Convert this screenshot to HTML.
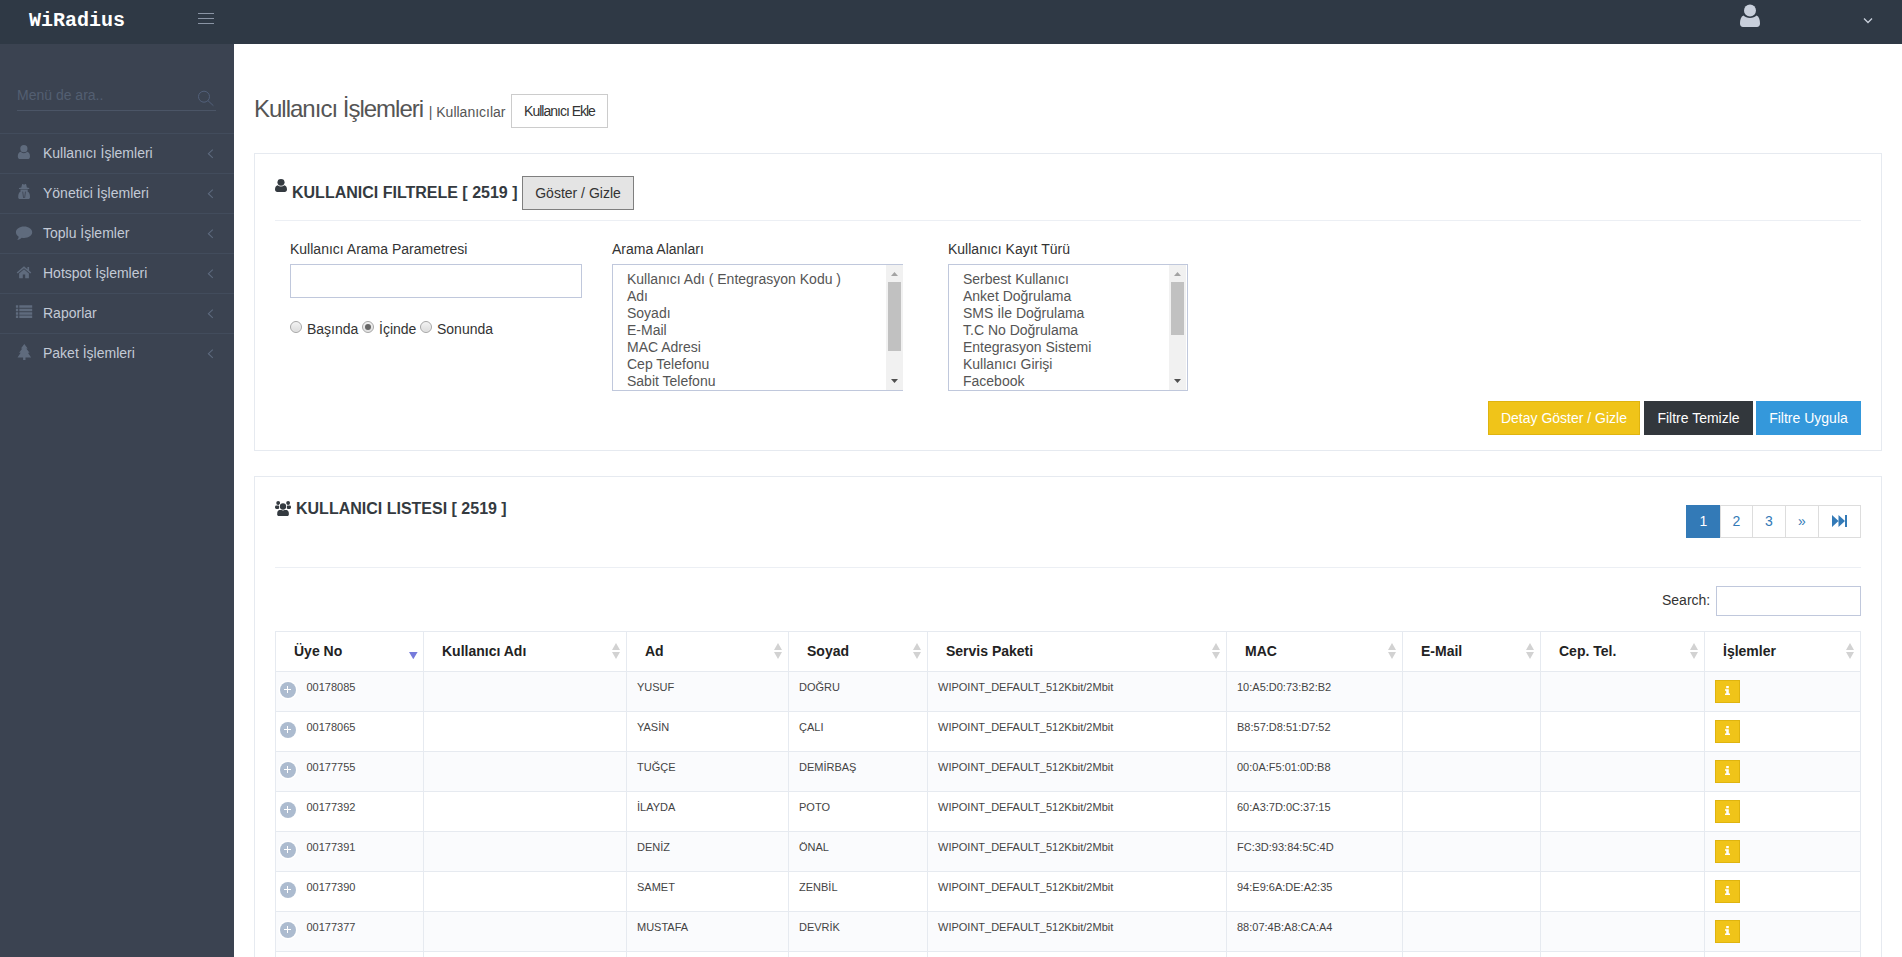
<!DOCTYPE html>
<html lang="tr">
<head>
<meta charset="utf-8">
<title>WiRadius</title>
<style>
*{box-sizing:border-box;}
html,body{margin:0;padding:0;}
body{width:1902px;height:957px;overflow:hidden;background:#fff;font-family:"Liberation Sans",Arial,sans-serif;font-size:14px;color:#333;position:relative;}
.a{position:absolute;white-space:nowrap;}
#hdr{left:0;top:0;width:1902px;height:44px;background:#2f3945;}
#logo{left:29px;top:9px;font-family:"Liberation Mono",monospace;font-weight:bold;font-size:20px;line-height:24px;color:#fff;}
#side{left:0;top:44px;width:234px;height:913px;background:#3b4351;}
#msearch{left:17px;top:81px;width:199px;height:30px;border-bottom:1px solid #4b5566;color:#535f71;font-size:14px;line-height:28px;}
.mi{left:0;width:234px;height:40px;border-top:1px solid #424c5c;color:#c3cad6;font-size:14px;line-height:39px;padding-left:43px;}
h3.pt{left:254px;top:94px;margin:0;font-size:24px;font-weight:normal;color:#555;letter-spacing:-1px;line-height:30px;}
h3.pt small{font-size:14px;color:#555;letter-spacing:0;}
.btn{text-align:center;font-size:14px;}
.panel{left:254px;width:1628px;border:1px solid #e6eaf0;background:#fff;}
.ph{font-size:16px;font-weight:bold;color:#343a40;line-height:20px;}
.hr{height:1px;background:#eceff4;}
.lbl{font-size:14px;color:#333;line-height:16px;}
.inp{border:1px solid #c0c8dc;background:#fff;}
.radio{width:12px;height:12px;border-radius:50%;border:1px solid #a6a6a6;background:linear-gradient(#f3f3f3,#dcdcdc);box-shadow:inset 0 0 1px #fff;}
.radio.on::after{content:"";position:absolute;left:2px;top:2px;width:6px;height:6px;border-radius:50%;background:#666;}
.sel{border:1px solid #c0c8dc;background:#fff;overflow:hidden;}
.opt{left:14px;font-size:14px;line-height:17px;color:#555;height:17px;}
.sb{background:#f1f1f1;width:17px;}
.thumb{background:#c1c1c1;width:13px;}
.pg{top:505px;height:33px;border:1px solid #ddd;background:#fff;color:#337ab7;font-size:14px;line-height:31px;text-align:center;}
.pg.on{background:#337ab7;border-color:#337ab7;color:#fff;}
.th{top:631px;height:41px;border:1px solid #e6eaf0;border-right:none;background:#fff;font-weight:bold;font-size:14px;color:#222;line-height:39px;padding-left:18px;}
.td{height:41px;border:1px solid #e6eaf0;border-right:none;font-size:11px;color:#444;line-height:13px;padding:9px 0 0 10px;}
.odd{background:#fafbfd;}
.plus{left:4px;top:10px;width:16px;height:16px;border-radius:50%;background:#acbbcf;box-shadow:0 0 0 1.5px #fff;}
.plus::before{content:"";position:absolute;left:4.100px;top:6.900px;width:7px;height:1.200px;background:#fff;}
.plus::after{content:"";position:absolute;left:7px;top:4px;width:1.300px;height:7px;background:#fff;}
.ib{width:25px;height:23px;background:#f0c419;border:1px solid #dfb40f;}
</style>
</head>
<body>
<div id="hdr" class="a">
<div id="logo" class="a">WiRadius</div>
<svg class="a" style="left:198px;top:12px" width="16" height="14" viewBox="0 0 16 14"><path d="M0 1.5H16M0 6.500H16M0 11.500H16" stroke="#8a94a4" stroke-width="1" fill="none"/></svg>
<svg class="a" style="left:1739px;top:4px" width="22" height="24" viewBox="0 0 22 24"><circle cx="11" cy="6.500" r="6" fill="#c8cfdb"/><path d="M4.500 11.500C2 12.500 1 15.500 1 19.500C1 21.500 2.200 23 4 23H18C19.800 23 21 21.500 21 19.500C21 15.500 20 12.500 17.500 11.500C16 13 13.800 14 11 14C8.200 14 6 13 4.500 11.500Z" fill="#c8cfdb"/></svg>
<svg class="a" style="left:1863px;top:17px" width="10" height="8" viewBox="0 0 10 8"><path d="M1 1.500L5 5.500L9 1.500" stroke="#c8cfdb" stroke-width="1.300" fill="none"/></svg>
</div>
<div id="side" class="a"></div>
<div id="msearch" class="a">Menü de ara..</div>
<svg class="a" style="left:197px;top:89px" width="18" height="18" viewBox="0 0 18 18"><circle cx="7" cy="7.700" r="5.500" stroke="#52607a" stroke-width="1" fill="none"/><path d="M11 11.700L16.400 16.700" stroke="#52607a" stroke-width="1"/></svg>
<div class="mi a" style="top:133px">Kullanıcı İşlemleri</div>
<svg class="a" style="left:15px;top:143px" width="19" height="19" viewBox="0 0 19 19" fill="#5f6b7d"><circle cx="8.900" cy="5.700" r="3.600"/><path d="M2.800 13.500C2.800 10.500 4 9.200 5.600 8.800C6.500 9.700 7.600 10.200 8.900 10.200C10.200 10.200 11.300 9.700 12.200 8.800C13.800 9.200 15 10.500 15 13.500C15 15.200 14 16.100 12.700 16.100H5.100C3.800 16.100 2.800 15.200 2.800 13.500Z"/></svg>
<svg class="a" style="left:206px;top:148px" width="8" height="12" viewBox="0 0 8 12"><path d="M6.800 1.600L2.400 5.700L6.800 9.800" stroke="#5d6a7e" stroke-width="1.100" fill="none"/></svg>
<div class="mi a" style="top:173px">Yönetici İşlemleri</div>
<svg class="a" style="left:15px;top:183px" width="19" height="19" viewBox="0 0 19 19" fill="#5f6b7d"><path d="M6.300 4.600L7.100 1.300C7.200 1 7.500 0.900 7.800 1.100L8.600 1.600H9.600L10.400 1.100C10.700 0.900 11 1 11.100 1.300L11.900 4.600L14.200 5.100V6H4V5.100Z"/><path d="M5.400 6.500H12.800L12.600 8.600C14.200 9.400 15 11.300 15 14.200C15 15.300 14.300 16 13.300 16H4.900C3.900 16 3.200 15.300 3.200 14.200C3.200 11.300 4 9.400 5.600 8.600Z"/><path d="M7.700 8.600L8.600 15M10.500 8.600L9.600 15" stroke="#3b4351" stroke-width="0.800" fill="none"/></svg>
<svg class="a" style="left:206px;top:188px" width="8" height="12" viewBox="0 0 8 12"><path d="M6.800 1.600L2.400 5.700L6.800 9.800" stroke="#5d6a7e" stroke-width="1.100" fill="none"/></svg>
<div class="mi a" style="top:213px">Toplu İşlemler</div>
<svg class="a" style="left:15px;top:223px" width="19" height="19" viewBox="0 0 19 19" fill="#5f6b7d"><path d="M9.050 3.600C13.550 3.600 17.200 6.150 17.200 9.300C17.200 12.450 13.550 15 9.050 15C8.250 15 7.500 14.920 6.800 14.780C5.600 16 3.900 16.900 2 17.100C2.900 16.200 3.500 15.200 3.700 13.700C2 12.650 0.900 11.050 0.900 9.300C0.900 6.150 4.550 3.600 9.050 3.600Z"/></svg>
<svg class="a" style="left:206px;top:228px" width="8" height="12" viewBox="0 0 8 12"><path d="M6.800 1.600L2.400 5.700L6.800 9.800" stroke="#5d6a7e" stroke-width="1.100" fill="none"/></svg>
<div class="mi a" style="top:253px">Hotspot İşlemleri</div>
<svg class="a" style="left:15px;top:263px" width="19" height="19" viewBox="0 0 19 19" fill="#5f6b7d"><path d="M9 3.300L1.700 9.400L2.700 10.500L9 5.200L15.300 10.500L16.300 9.400L14.100 7.550V4.100H12.400V6.150Z"/><path d="M9 6.300L4.100 10.400V15.200H7.800V11.600H10.200V15.200H13.900V10.400Z"/></svg>
<svg class="a" style="left:206px;top:268px" width="8" height="12" viewBox="0 0 8 12"><path d="M6.800 1.600L2.400 5.700L6.800 9.800" stroke="#5d6a7e" stroke-width="1.100" fill="none"/></svg>
<div class="mi a" style="top:293px">Raporlar</div>
<svg class="a" style="left:15px;top:303px" width="19" height="19" viewBox="0 0 19 19" fill="#5f6b7d"><path d="M0.900 2.200H3.200V4.700H0.900ZM4.300 2.200H17.200V4.700H4.300ZM0.900 5.670H3.200V8.170H0.900ZM4.300 5.670H17.200V8.170H4.300ZM0.900 9.130H3.200V11.630H0.900ZM4.300 9.130H17.200V11.630H4.300ZM0.900 12.600H3.200V15.100H0.900ZM4.300 12.600H17.200V15.100H4.300Z"/></svg>
<svg class="a" style="left:206px;top:308px" width="8" height="12" viewBox="0 0 8 12"><path d="M6.800 1.600L2.400 5.700L6.800 9.800" stroke="#5d6a7e" stroke-width="1.100" fill="none"/></svg>
<div class="mi a" style="top:333px">Paket İşlemleri</div>
<svg class="a" style="left:15px;top:343px" width="19" height="19" viewBox="0 0 19 19" fill="#5f6b7d"><path d="M9.300 1.100L12.700 5.500H11.300L14.500 9.700H12.900L16.100 14.500H10.500V17.100H8.100V14.500H2.500L5.700 9.700H4.100L7.300 5.500H5.900Z"/></svg>
<svg class="a" style="left:206px;top:348px" width="8" height="12" viewBox="0 0 8 12"><path d="M6.800 1.600L2.400 5.700L6.800 9.800" stroke="#5d6a7e" stroke-width="1.100" fill="none"/></svg>
<h3 class="pt a">Kullanıcı İşlemleri <small>| Kullanıcılar</small></h3>
<div class="btn a" style="left:511px;top:94px;width:97px;height:34px;border:1px solid #ccc;background:#fff;color:#333;letter-spacing:-1px;line-height:32px;">Kullanıcı Ekle</div>
<div class="panel a" style="top:153px;height:298px;"></div>
<svg class="a" style="left:275px;top:179px" width="12" height="13" viewBox="2.8 2.100 12.200 14" fill="#343a40" preserveAspectRatio="none"><circle cx="8.900" cy="5.700" r="3.600"/><path d="M2.800 13.500C2.800 10.500 4 9.200 5.600 8.800C6.500 9.700 7.600 10.200 8.900 10.200C10.200 10.200 11.300 9.700 12.200 8.800C13.800 9.200 15 10.500 15 13.500C15 15.200 14 16.100 12.700 16.100H5.100C3.800 16.100 2.800 15.200 2.800 13.500Z"/></svg>
<div class="ph a" style="left:292px;top:183px;">KULLANICI FILTRELE [ 2519 ]</div>
<div class="btn a" style="left:522px;top:176px;width:112px;height:34px;border:1px solid #7f7f7f;background:#e4e4e4;color:#333;line-height:33px;">Göster / Gizle</div>
<div class="hr a" style="left:275px;top:220px;width:1586px;"></div>
<div class="lbl a" style="left:290px;top:241px;">Kullanıcı Arama Parametresi</div>
<div class="lbl a" style="left:612px;top:241px;">Arama Alanları</div>
<div class="lbl a" style="left:948px;top:241px;">Kullanıcı Kayıt Türü</div>
<div class="inp a" style="left:290px;top:264px;width:292px;height:34px;"></div>
<div class="radio a" style="left:290px;top:321px;"></div><div class="lbl a" style="left:307px;top:321px;">Başında</div>
<div class="radio on a" style="left:362px;top:321px;"></div><div class="lbl a" style="left:379px;top:321px;">İçinde</div>
<div class="radio a" style="left:420px;top:321px;"></div><div class="lbl a" style="left:437px;top:321px;">Sonunda</div>
<div class="sel a" style="left:612px;top:264px;width:291px;height:127px;border-right:none;">
<div class="opt a" style="top:6px">Kullanıcı Adı ( Entegrasyon Kodu )</div>
<div class="opt a" style="top:23px">Adı</div>
<div class="opt a" style="top:40px">Soyadı</div>
<div class="opt a" style="top:57px">E-Mail</div>
<div class="opt a" style="top:74px">MAC Adresi</div>
<div class="opt a" style="top:91px">Cep Telefonu</div>
<div class="opt a" style="top:108px">Sabit Telefonu</div>
<div class="opt a" style="top:125px">Adres</div>
<div class="sb a" style="left:273px;top:0;height:125px;"></div>
<div class="thumb a" style="left:275px;top:17px;height:69px;"></div>
<svg class="a" style="left:278px;top:7px" width="7" height="4" viewBox="0 0 7 4"><path d="M0 4L3.500 0L7 4Z" fill="#a3a3a3"/></svg>
<svg class="a" style="left:278px;top:114px" width="7" height="4" viewBox="0 0 7 4"><path d="M0 0L3.500 4L7 0Z" fill="#505050"/></svg>
</div>
<div class="sel a" style="left:948px;top:264px;width:240px;height:127px;">
<div class="opt a" style="top:6px">Serbest Kullanıcı</div>
<div class="opt a" style="top:23px">Anket Doğrulama</div>
<div class="opt a" style="top:40px">SMS İle Doğrulama</div>
<div class="opt a" style="top:57px">T.C No Doğrulama</div>
<div class="opt a" style="top:74px">Entegrasyon Sistemi</div>
<div class="opt a" style="top:91px">Kullanıcı Girişi</div>
<div class="opt a" style="top:108px">Facebook</div>
<div class="opt a" style="top:125px">Twitter</div>
<div class="sb a" style="left:220px;top:0;height:125px;"></div>
<div class="thumb a" style="left:222px;top:17px;height:53px;"></div>
<svg class="a" style="left:225px;top:7px" width="7" height="4" viewBox="0 0 7 4"><path d="M0 4L3.500 0L7 4Z" fill="#a3a3a3"/></svg>
<svg class="a" style="left:225px;top:114px" width="7" height="4" viewBox="0 0 7 4"><path d="M0 0L3.500 4L7 0Z" fill="#505050"/></svg>
</div>
<div class="btn a" style="left:1488px;top:401px;width:152px;height:34px;background:#f0c419;border:1px solid #dfb40f;color:#fff;line-height:32px;">Detay Göster / Gizle</div>
<div class="btn a" style="left:1644px;top:401px;width:109px;height:34px;background:#32373c;color:#fff;line-height:34px;">Filtre Temizle</div>
<div class="btn a" style="left:1756px;top:401px;width:105px;height:34px;background:#3498db;color:#fff;line-height:34px;">Filtre Uygula</div>
<div class="panel a" style="top:476px;height:520px;"></div>
<svg class="a" style="left:274px;top:500px" width="18" height="17" viewBox="0 0 18 17" fill="#343a40"><circle cx="4.200" cy="3" r="1.950"/><circle cx="14.100" cy="3" r="1.950"/><rect x="1.050" y="5.400" width="4.400" height="3.500" rx="1.300"/><rect x="12.600" y="5.400" width="4.400" height="3.500" rx="1.300"/><path d="M3.150 14.200C3.150 11.900 3.900 10.500 5.300 10.100H12.700C14.100 10.500 14.900 11.900 14.900 14.200C14.900 15.300 14.200 16 13.200 16H4.800C3.800 16 3.150 15.300 3.150 14.200Z"/><circle cx="9" cy="6.500" r="3.900" fill="#fff"/><circle cx="9" cy="6.500" r="3.150"/></svg>
<div class="ph a" style="left:296px;top:499px;">KULLANICI LISTESI [ 2519 ]</div>
<div class="pg a on" style="left:1686px;width:35px;">1</div>
<div class="pg a" style="left:1720px;width:33px;">2</div>
<div class="pg a" style="left:1752px;width:34px;">3</div>
<div class="pg a" style="left:1785px;width:34px;">»</div>
<div class="pg a" style="left:1818px;width:43px;"></div>
<svg class="a" style="left:1832px;top:515px" width="15" height="12" viewBox="0 0 15 12" fill="#337ab7"><path d="M0 0L6.500 6L0 12ZM6.500 0L13 6L6.500 12ZM13 0H15V12H13Z"/></svg>
<div class="hr a" style="left:275px;top:567px;width:1586px;"></div>
<div class="lbl a" style="left:1662px;top:592px;">Search:</div>
<div class="inp a" style="left:1716px;top:586px;width:145px;height:30px;"></div>
<div class="th a" style="left:275px;width:148px;">Üye No</div>
<svg class="a" style="left:409.300px;top:652px" width="8.600" height="7.200" viewBox="0 0 8 7" preserveAspectRatio="none"><path d="M0 0H8L4 7Z" fill="#767bdb"/></svg>
<div class="th a" style="left:423px;width:203px;">Kullanıcı Adı</div>
<svg class="a" style="left:612px;top:643px" width="8" height="16" viewBox="0 0 8 15" fill="#d2d2d2" preserveAspectRatio="none"><path d="M0 6.500L4 0L8 6.500ZM0 8.500H8L4 15Z"/></svg>
<div class="th a" style="left:626px;width:162px;">Ad</div>
<svg class="a" style="left:774px;top:643px" width="8" height="16" viewBox="0 0 8 15" fill="#d2d2d2" preserveAspectRatio="none"><path d="M0 6.500L4 0L8 6.500ZM0 8.500H8L4 15Z"/></svg>
<div class="th a" style="left:788px;width:139px;">Soyad</div>
<svg class="a" style="left:913px;top:643px" width="8" height="16" viewBox="0 0 8 15" fill="#d2d2d2" preserveAspectRatio="none"><path d="M0 6.500L4 0L8 6.500ZM0 8.500H8L4 15Z"/></svg>
<div class="th a" style="left:927px;width:299px;">Servis Paketi</div>
<svg class="a" style="left:1212px;top:643px" width="8" height="16" viewBox="0 0 8 15" fill="#d2d2d2" preserveAspectRatio="none"><path d="M0 6.500L4 0L8 6.500ZM0 8.500H8L4 15Z"/></svg>
<div class="th a" style="left:1226px;width:176px;">MAC</div>
<svg class="a" style="left:1388px;top:643px" width="8" height="16" viewBox="0 0 8 15" fill="#d2d2d2" preserveAspectRatio="none"><path d="M0 6.500L4 0L8 6.500ZM0 8.500H8L4 15Z"/></svg>
<div class="th a" style="left:1402px;width:138px;">E-Mail</div>
<svg class="a" style="left:1526px;top:643px" width="8" height="16" viewBox="0 0 8 15" fill="#d2d2d2" preserveAspectRatio="none"><path d="M0 6.500L4 0L8 6.500ZM0 8.500H8L4 15Z"/></svg>
<div class="th a" style="left:1540px;width:164px;">Cep. Tel.</div>
<svg class="a" style="left:1690px;top:643px" width="8" height="16" viewBox="0 0 8 15" fill="#d2d2d2" preserveAspectRatio="none"><path d="M0 6.500L4 0L8 6.500ZM0 8.500H8L4 15Z"/></svg>
<div class="th a" style="left:1704px;width:157px;border-right:1px solid #e6eaf0;">İşlemler</div>
<svg class="a" style="left:1846px;top:643px" width="8" height="16" viewBox="0 0 8 15" fill="#d2d2d2" preserveAspectRatio="none"><path d="M0 6.500L4 0L8 6.500ZM0 8.500H8L4 15Z"/></svg>
<div class="td a odd" style="left:275px;top:671px;width:148px;padding-left:30.500px;"><div class="plus a"></div>00178085</div>
<div class="td a odd" style="left:423px;top:671px;width:203px;"></div>
<div class="td a odd" style="left:626px;top:671px;width:162px;">YUSUF</div>
<div class="td a odd" style="left:788px;top:671px;width:139px;">DOĞRU</div>
<div class="td a odd" style="left:927px;top:671px;width:299px;">WIPOINT_DEFAULT_512Kbit/2Mbit</div>
<div class="td a odd" style="left:1226px;top:671px;width:176px;">10:A5:D0:73:B2:B2</div>
<div class="td a odd" style="left:1402px;top:671px;width:138px;"></div>
<div class="td a odd" style="left:1540px;top:671px;width:164px;"></div>
<div class="td a odd" style="left:1704px;top:671px;width:157px;border-right:1px solid #e6eaf0;"><div class="ib a" style="left:10px;top:8px;"><svg class="a" style="left:9px;top:5px" width="5" height="9" viewBox="0 0 5 10" fill="#fff" preserveAspectRatio="none"><path d="M1.200 0H3.800V2.400H1.200ZM0 3.600H3.800V8.400H5V10H0V8.400H1.200V5.200H0Z"/></svg></div></div>
<div class="td a" style="left:275px;top:711px;width:148px;padding-left:30.500px;"><div class="plus a"></div>00178065</div>
<div class="td a" style="left:423px;top:711px;width:203px;"></div>
<div class="td a" style="left:626px;top:711px;width:162px;">YASİN</div>
<div class="td a" style="left:788px;top:711px;width:139px;">ÇALI</div>
<div class="td a" style="left:927px;top:711px;width:299px;">WIPOINT_DEFAULT_512Kbit/2Mbit</div>
<div class="td a" style="left:1226px;top:711px;width:176px;">B8:57:D8:51:D7:52</div>
<div class="td a" style="left:1402px;top:711px;width:138px;"></div>
<div class="td a" style="left:1540px;top:711px;width:164px;"></div>
<div class="td a" style="left:1704px;top:711px;width:157px;border-right:1px solid #e6eaf0;"><div class="ib a" style="left:10px;top:8px;"><svg class="a" style="left:9px;top:5px" width="5" height="9" viewBox="0 0 5 10" fill="#fff" preserveAspectRatio="none"><path d="M1.200 0H3.800V2.400H1.200ZM0 3.600H3.800V8.400H5V10H0V8.400H1.200V5.200H0Z"/></svg></div></div>
<div class="td a odd" style="left:275px;top:751px;width:148px;padding-left:30.500px;"><div class="plus a"></div>00177755</div>
<div class="td a odd" style="left:423px;top:751px;width:203px;"></div>
<div class="td a odd" style="left:626px;top:751px;width:162px;">TUĞÇE</div>
<div class="td a odd" style="left:788px;top:751px;width:139px;">DEMİRBAŞ</div>
<div class="td a odd" style="left:927px;top:751px;width:299px;">WIPOINT_DEFAULT_512Kbit/2Mbit</div>
<div class="td a odd" style="left:1226px;top:751px;width:176px;">00:0A:F5:01:0D:B8</div>
<div class="td a odd" style="left:1402px;top:751px;width:138px;"></div>
<div class="td a odd" style="left:1540px;top:751px;width:164px;"></div>
<div class="td a odd" style="left:1704px;top:751px;width:157px;border-right:1px solid #e6eaf0;"><div class="ib a" style="left:10px;top:8px;"><svg class="a" style="left:9px;top:5px" width="5" height="9" viewBox="0 0 5 10" fill="#fff" preserveAspectRatio="none"><path d="M1.200 0H3.800V2.400H1.200ZM0 3.600H3.800V8.400H5V10H0V8.400H1.200V5.200H0Z"/></svg></div></div>
<div class="td a" style="left:275px;top:791px;width:148px;padding-left:30.500px;"><div class="plus a"></div>00177392</div>
<div class="td a" style="left:423px;top:791px;width:203px;"></div>
<div class="td a" style="left:626px;top:791px;width:162px;">İLAYDA</div>
<div class="td a" style="left:788px;top:791px;width:139px;">POTO</div>
<div class="td a" style="left:927px;top:791px;width:299px;">WIPOINT_DEFAULT_512Kbit/2Mbit</div>
<div class="td a" style="left:1226px;top:791px;width:176px;">60:A3:7D:0C:37:15</div>
<div class="td a" style="left:1402px;top:791px;width:138px;"></div>
<div class="td a" style="left:1540px;top:791px;width:164px;"></div>
<div class="td a" style="left:1704px;top:791px;width:157px;border-right:1px solid #e6eaf0;"><div class="ib a" style="left:10px;top:8px;"><svg class="a" style="left:9px;top:5px" width="5" height="9" viewBox="0 0 5 10" fill="#fff" preserveAspectRatio="none"><path d="M1.200 0H3.800V2.400H1.200ZM0 3.600H3.800V8.400H5V10H0V8.400H1.200V5.200H0Z"/></svg></div></div>
<div class="td a odd" style="left:275px;top:831px;width:148px;padding-left:30.500px;"><div class="plus a"></div>00177391</div>
<div class="td a odd" style="left:423px;top:831px;width:203px;"></div>
<div class="td a odd" style="left:626px;top:831px;width:162px;">DENİZ</div>
<div class="td a odd" style="left:788px;top:831px;width:139px;">ÖNAL</div>
<div class="td a odd" style="left:927px;top:831px;width:299px;">WIPOINT_DEFAULT_512Kbit/2Mbit</div>
<div class="td a odd" style="left:1226px;top:831px;width:176px;">FC:3D:93:84:5C:4D</div>
<div class="td a odd" style="left:1402px;top:831px;width:138px;"></div>
<div class="td a odd" style="left:1540px;top:831px;width:164px;"></div>
<div class="td a odd" style="left:1704px;top:831px;width:157px;border-right:1px solid #e6eaf0;"><div class="ib a" style="left:10px;top:8px;"><svg class="a" style="left:9px;top:5px" width="5" height="9" viewBox="0 0 5 10" fill="#fff" preserveAspectRatio="none"><path d="M1.200 0H3.800V2.400H1.200ZM0 3.600H3.800V8.400H5V10H0V8.400H1.200V5.200H0Z"/></svg></div></div>
<div class="td a" style="left:275px;top:871px;width:148px;padding-left:30.500px;"><div class="plus a"></div>00177390</div>
<div class="td a" style="left:423px;top:871px;width:203px;"></div>
<div class="td a" style="left:626px;top:871px;width:162px;">SAMET</div>
<div class="td a" style="left:788px;top:871px;width:139px;">ZENBİL</div>
<div class="td a" style="left:927px;top:871px;width:299px;">WIPOINT_DEFAULT_512Kbit/2Mbit</div>
<div class="td a" style="left:1226px;top:871px;width:176px;">94:E9:6A:DE:A2:35</div>
<div class="td a" style="left:1402px;top:871px;width:138px;"></div>
<div class="td a" style="left:1540px;top:871px;width:164px;"></div>
<div class="td a" style="left:1704px;top:871px;width:157px;border-right:1px solid #e6eaf0;"><div class="ib a" style="left:10px;top:8px;"><svg class="a" style="left:9px;top:5px" width="5" height="9" viewBox="0 0 5 10" fill="#fff" preserveAspectRatio="none"><path d="M1.200 0H3.800V2.400H1.200ZM0 3.600H3.800V8.400H5V10H0V8.400H1.200V5.200H0Z"/></svg></div></div>
<div class="td a odd" style="left:275px;top:911px;width:148px;padding-left:30.500px;"><div class="plus a"></div>00177377</div>
<div class="td a odd" style="left:423px;top:911px;width:203px;"></div>
<div class="td a odd" style="left:626px;top:911px;width:162px;">MUSTAFA</div>
<div class="td a odd" style="left:788px;top:911px;width:139px;">DEVRİK</div>
<div class="td a odd" style="left:927px;top:911px;width:299px;">WIPOINT_DEFAULT_512Kbit/2Mbit</div>
<div class="td a odd" style="left:1226px;top:911px;width:176px;">88:07:4B:A8:CA:A4</div>
<div class="td a odd" style="left:1402px;top:911px;width:138px;"></div>
<div class="td a odd" style="left:1540px;top:911px;width:164px;"></div>
<div class="td a odd" style="left:1704px;top:911px;width:157px;border-right:1px solid #e6eaf0;"><div class="ib a" style="left:10px;top:8px;"><svg class="a" style="left:9px;top:5px" width="5" height="9" viewBox="0 0 5 10" fill="#fff" preserveAspectRatio="none"><path d="M1.200 0H3.800V2.400H1.200ZM0 3.600H3.800V8.400H5V10H0V8.400H1.200V5.200H0Z"/></svg></div></div>
<div class="td a" style="left:275px;top:951px;width:148px;padding-left:30.500px;"><div class="plus a"></div>00177376</div>
<div class="td a" style="left:423px;top:951px;width:203px;"></div>
<div class="td a" style="left:626px;top:951px;width:162px;"></div>
<div class="td a" style="left:788px;top:951px;width:139px;"></div>
<div class="td a" style="left:927px;top:951px;width:299px;">WIPOINT_DEFAULT_512Kbit/2Mbit</div>
<div class="td a" style="left:1226px;top:951px;width:176px;"></div>
<div class="td a" style="left:1402px;top:951px;width:138px;"></div>
<div class="td a" style="left:1540px;top:951px;width:164px;"></div>
<div class="td a" style="left:1704px;top:951px;width:157px;border-right:1px solid #e6eaf0;"><div class="ib a" style="left:10px;top:8px;"><svg class="a" style="left:9px;top:5px" width="5" height="9" viewBox="0 0 5 10" fill="#fff" preserveAspectRatio="none"><path d="M1.200 0H3.800V2.400H1.200ZM0 3.600H3.800V8.400H5V10H0V8.400H1.200V5.200H0Z"/></svg></div></div>
</body>
</html>
